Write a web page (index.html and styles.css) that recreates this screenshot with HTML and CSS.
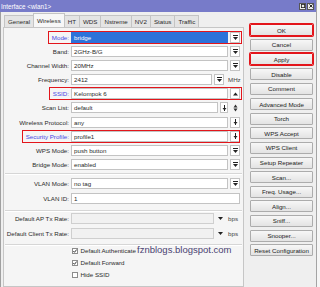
FILE: index.html
```html
<!DOCTYPE html>
<html>
<head>
<meta charset="utf-8">
<link rel="stylesheet" href="styles.css">
</head>
<body>
<div class="window">
  <div class="titlebar">
    <span class="title">Interface &lt;wlan1&gt;</span>
    <div class="wbtns">
      <span class="wbtn"><svg width="5" height="5" viewBox="0 0 5 5"><rect x="0.5" y="0.5" width="4" height="4" fill="none" stroke="#222"/></svg></span>
      <span class="wbtn"><svg width="5" height="5" viewBox="0 0 5 5"><path d="M0.5 0.5l4 4M4.5 0.5l-4 4" stroke="#222" stroke-width="1.2"/></svg></span>
    </div>
  </div>
  <div class="main">
    <div class="left">
      <div class="tabs">
        <span class="tab">General</span>
        <span class="tab active">Wireless</span>
        <span class="tab">HT</span>
        <span class="tab">WDS</span>
        <span class="tab">Nstreme</span>
        <span class="tab">NV2</span>
        <span class="tab">Status</span>
        <span class="tab">Traffic</span>
      </div>
      <div class="panel">
        <div class="row">
          <div class="lbl"><span class="mark blue">Mode:</span></div>
          <div class="field"><div class="inp sel">bridge</div><div class="dd"><svg width="5" height="5" viewBox="0 0 5 5"><path d="M0 .5h5" stroke="#222"/><path d="M0 2h5L2.5 5z" fill="#222"/></svg></div></div>
        </div>
        <div class="row">
          <div class="lbl">Band:</div>
          <div class="field"><div class="inp">2GHz-B/G</div><div class="dd"><svg width="5" height="5" viewBox="0 0 5 5"><path d="M0 .5h5" stroke="#222"/><path d="M0 2h5L2.5 5z" fill="#222"/></svg></div></div>
        </div>
        <div class="row">
          <div class="lbl">Channel Width:</div>
          <div class="field"><div class="inp">20MHz</div><div class="dd"><svg width="5" height="5" viewBox="0 0 5 5"><path d="M0 .5h5" stroke="#222"/><path d="M0 2h5L2.5 5z" fill="#222"/></svg></div></div>
        </div>
        <div class="row">
          <div class="lbl">Frequency:</div>
          <div class="field"><div class="inp">2412</div><div class="dd"><svg width="5" height="5" viewBox="0 0 5 5"><path d="M0 .5h5" stroke="#222"/><path d="M0 2h5L2.5 5z" fill="#222"/></svg></div><div class="unit">MHz</div></div>
        </div>
        <div class="row">
          <div class="lbl"><span class="mark blue">SSID:</span></div>
          <div class="field"><div class="inp">Kelompok 6</div><div class="dd plain"><svg width="5" height="4" viewBox="0 0 5 4"><path d="M0 3.5h5L2.5 0.5z" fill="#222"/></svg></div></div>
        </div>
        <div class="row">
          <div class="lbl">Scan List:</div>
          <div class="field"><div class="inp">default</div><div class="dd small"><svg width="5" height="6" viewBox="0 0 5 6"><path d="M2.5 0v6" stroke="#222"/><path d="M0.5 3h4l-2 2.5z" fill="#222"/></svg></div><div class="ud"><svg width="5" height="8" viewBox="0 0 5 8"><path d="M0.5 3.5h4l-2-3zM0.5 4.5h4l-2 3z" fill="#333"/></svg></div></div>
        </div>
        <div class="row">
          <div class="lbl">Wireless Protocol:</div>
          <div class="field"><div class="inp">any</div><div class="dd"><svg width="5" height="6" viewBox="0 0 5 6"><path d="M2.5 0v6" stroke="#222"/><path d="M0.5 3h4l-2 2.5z" fill="#222"/></svg></div></div>
        </div>
        <div class="row">
          <div class="lbl"><span class="mark blue wide">Security Profile:</span></div>
          <div class="field"><div class="inp">profile1</div><div class="dd"><svg width="5" height="6" viewBox="0 0 5 6"><path d="M2.5 0v6" stroke="#222"/><path d="M0.5 3h4l-2 2.5z" fill="#222"/></svg></div></div>
        </div>
        <div class="row">
          <div class="lbl">WPS Mode:</div>
          <div class="field"><div class="inp">push button</div><div class="dd"><svg width="5" height="5" viewBox="0 0 5 5"><path d="M0 .5h5" stroke="#222"/><path d="M0 2h5L2.5 5z" fill="#222"/></svg></div></div>
        </div>
        <div class="row">
          <div class="lbl">Bridge Mode:</div>
          <div class="field"><div class="inp">enabled</div><div class="dd"><svg width="5" height="5" viewBox="0 0 5 5"><path d="M0 .5h5" stroke="#222"/><path d="M0 2h5L2.5 5z" fill="#222"/></svg></div></div>
        </div>
        <div class="sep sep1"></div>
        <div class="row">
          <div class="lbl">VLAN Mode:</div>
          <div class="field"><div class="inp">no tag</div><div class="dd"><svg width="5" height="5" viewBox="0 0 5 5"><path d="M0 .5h5" stroke="#222"/><path d="M0 2h5L2.5 5z" fill="#222"/></svg></div></div>
        </div>
        <div class="row">
          <div class="lbl">VLAN ID:</div>
          <div class="field"><div class="inp">1</div></div>
        </div>
        <div class="sep sep2"></div>
        <div class="row">
          <div class="lbl">Default AP Tx Rate:</div>
          <div class="field"><div class="inp off"></div><div class="tri"><svg width="5" height="3" viewBox="0 0 5 3"><path d="M0 0h5L2.5 3z" fill="#222"/></svg></div><div class="unit">bps</div></div>
        </div>
        <div class="row">
          <div class="lbl">Default Client Tx Rate:</div>
          <div class="field"><div class="inp off"></div><div class="tri"><svg width="5" height="3" viewBox="0 0 5 3"><path d="M0 0h5L2.5 3z" fill="#222"/></svg></div><div class="unit">bps</div></div>
        </div>
        <div class="sep sep3"></div>
        <div class="chk"><span class="box"><svg width="4" height="4" viewBox="0 0 4 4"><path d="M0.3 2l1.2 1.3L3.7 0.5" fill="none" stroke="#222" stroke-width="0.9"/></svg></span>Default Authenticate</div>
        <div class="chk"><span class="box"><svg width="4" height="4" viewBox="0 0 4 4"><path d="M0.3 2l1.2 1.3L3.7 0.5" fill="none" stroke="#222" stroke-width="0.9"/></svg></span>Default Forward</div>
        <div class="chk"><span class="box"></span>Hide SSID</div>
      </div>
    </div>
    <div class="btns">
      <div class="grp">
        <div class="btn red">OK</div>
        <div class="btn">Cancel</div>
        <div class="btn red">Apply</div>
      </div>
      <div class="grp">
        <div class="btn">Disable</div>
        <div class="btn">Comment</div>
      </div>
      <div class="grp">
        <div class="btn">Advanced Mode</div>
        <div class="btn">Torch</div>
        <div class="btn">WPS Accept</div>
        <div class="btn">WPS Client</div>
        <div class="btn">Setup Repeater</div>
        <div class="btn">Scan...</div>
        <div class="btn">Freq. Usage...</div>
        <div class="btn">Align...</div>
        <div class="btn">Sniff...</div>
        <div class="btn">Snooper...</div>
        <div class="btn">Reset Configuration</div>
      </div>
    </div>
  </div>
  <div class="watermark">fznblogs.blogspot.com</div>
</div>
</body>
</html>
```
FILE: styles.css
```css
* { box-sizing: border-box; }
html, body {
  margin: 0;
  padding: 0;
}
body {
  width: 320px;
  height: 287px;
  overflow: hidden;
  background: #f6f6f6;
  font-family: "Liberation Sans", Arial, sans-serif;
  font-size: 6.2px;
  color: #2a2a2a;
}
.window {
  position: relative;
  width: 317px;
  height: 287px;
  background: #efefef;
  border-right: 1px solid #a4a4a4;
  overflow: hidden;
}
.titlebar {
  height: 12px;
  background: #777bc9;
  color: #fff;
  display: flex;
  align-items: center;
  justify-content: space-between;
  padding: 0 2px 0 1px;
  font-size: 6.3px;
}
.wbtns { display: flex; gap: 1px; }
.wbtn {
  width: 7px;
  height: 7px;
  background: #ececec;
  border: 0.5px solid #555;
  display: flex;
  align-items: center;
  justify-content: center;
}
.wbtn svg { width: 4px; height: 4px; }
.main {
  display: flex;
  height: 275px;
  border-left: 1px solid #a0a0a0;
}
.left {
  width: 241px;
  margin-left: 2px;
  display: flex;
  flex-direction: column;
}
.tabs {
  height: 15px;
  display: flex;
  align-items: flex-end;
  padding-left: 1px;
}
.tab {
  height: 12px;
  padding: 0 3px;
  border: 1px solid #c4c4c4;
  border-bottom: none;
  margin-right: -1px;
  background: #e4e4e4;
  display: flex;
  align-items: center;
  color: #2a2a2a;
}
.tab.active {
  height: 14px;
  background: #f7f7f7;
  padding: 0 3px;
}
.panel {
  flex: 1;
  border: 1px solid #c6c6c6;
  background: #f5f5f5;
  padding-top: 4px;
}
.row {
  display: flex;
  height: 11px;
  margin-bottom: 3.1px;
}
.lbl {
  width: 65px;
  line-height: 11px;
  text-align: right;
  white-space: nowrap;
}
.mark {
  position: relative;
  display: inline-block;
  height: 11px;
}
.mark::after {
  content: "";
  position: absolute;
  left: -4px;
  right: -173px;
  top: -1px;
  bottom: -1px;
  border: 1.5px solid #e3151b;
}
.mark.wide::after { right: -171px; }
.blue { color: #4747e4; }
.field {
  width: 169px;
  margin-left: 2px;
  display: flex;
  gap: 2px;
}
.inp {
  flex: 1;
  background: #fff;
  border: 1px solid #c3c3c3;
  padding-left: 2px;
  display: flex;
  align-items: center;
  white-space: nowrap;
}
.inp.sel {
  background: #2d72d9;
  border-color: #2d72d9;
  color: #fff;
}
.inp.off {
  background: #f1f1f1;
  border-color: #cfcfcf;
}
.dd {
  width: 10px;
  background: #fff;
  border: 1px solid #c3c3c3;
  display: flex;
  align-items: center;
  justify-content: center;
}
.dd.small { width: 8px; }
.ud, .tri {
  display: flex;
  align-items: center;
  justify-content: center;
}
.ud { width: 10px; }
.tri { width: 8px; }
.unit {
  width: 14px;
  padding-left: 2px;
  display: flex;
  align-items: center;
  color: #444;
}
.sep {
  border-top: 1px solid #d6d6d6;
  box-shadow: 0 1px 0 #fff;
  margin: 0 1px;
}
.sep1 { margin-top: 0; margin-bottom: 4.5px; }
.sep2 { margin-top: 6.4px; margin-bottom: 2.5px; }
.sep3 { margin-top: 5.4px; }
.chk {
  height: 12px;
  display: flex;
  align-items: center;
  gap: 2.5px;
  padding-left: 68px;
}
.box {
  width: 6px;
  height: 6px;
  background: #fff;
  border: 1px solid #8c8c8c;
  display: flex;
  align-items: center;
  justify-content: center;
}
.btns {
  width: 63px;
  margin-left: 6px;
  padding-top: 12px;
}
.grp { margin-bottom: 3.2px; }
.btn {
  height: 12px;
  margin-bottom: 2.6px;
  border: 1px solid #acacac;
  border-radius: 1px;
  background: linear-gradient(#f7f7f7, #e3e3e3);
  display: flex;
  align-items: center;
  justify-content: center;
  color: #222;
  white-space: nowrap;
}
.btn.red {
  border-color: #e3151b;
  box-shadow: 0 0 0 1px #e3151b;
}
.watermark {
  position: absolute;
  left: 137px;
  top: 243.5px;
  font-size: 9.5px;
  line-height: 11px;
  color: #4a4272;
  white-space: nowrap;
}
```
